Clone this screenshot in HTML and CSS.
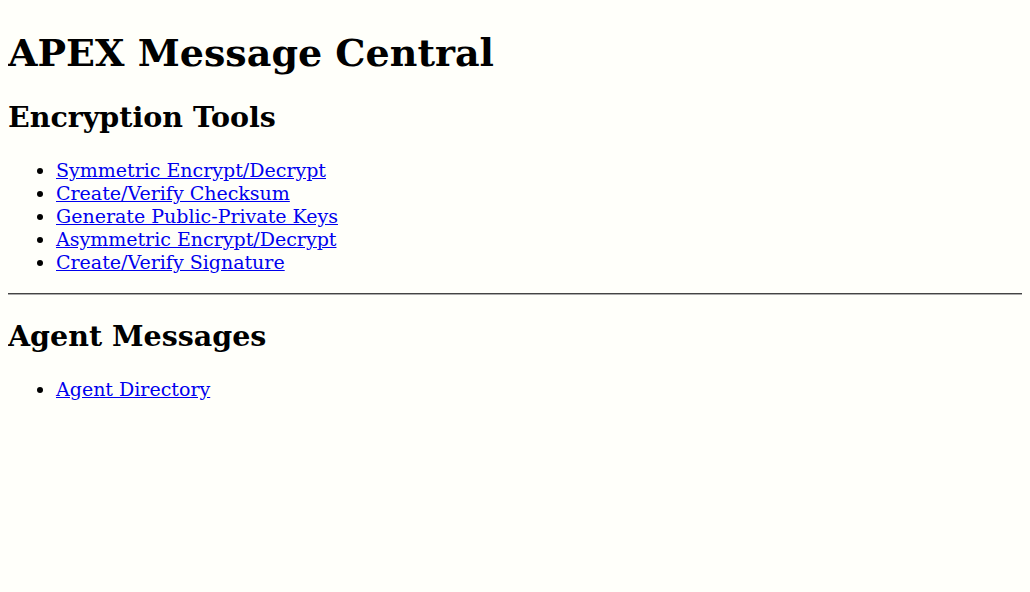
FILE: index.html
```html
<!DOCTYPE html>
<html>
<head>
<meta charset="utf-8">
<title>APEX Message Central</title>
<link rel="stylesheet" href="styles.css">
</head>
<body class="page">
<h1 class="title">APEX Message Central</h1>
<h2 class="section">Encryption Tools</h2>
<ul class="links links-first">
<li><a href="#">Symmetric Encrypt/Decrypt</a></li>
<li><a href="#">Create/Verify Checksum</a></li>
<li><a href="#">Generate Public-Private Keys</a></li>
<li><a href="#">Asymmetric Encrypt/Decrypt</a></li>
<li><a href="#">Create/Verify Signature</a></li>
</ul>
<hr class="rule">
<h2 class="section">Agent Messages</h2>
<ul class="links links-last">
<li><a href="#">Agent Directory</a></li>
</ul>
</body>
</html>
```
FILE: styles.css
```css
html { background: #fffffa; overflow: hidden; }
.page {
  font-family: "DejaVu Serif", serif;
  font-size: 19px;
  color: #000;
}
.title { margin-top: 22px; }
.links { padding-left: 48px; }
.links li { line-height: 23px; }
.links a { color: #0000ee; }
.links-first { margin-top: 24.6px; }
.links-last { margin-top: 25.6px; }
.rule {
  box-sizing: border-box;
  width: calc(100% + 30px);
  margin: 11px 0 9.5px 0;
  border: none;
  border-top: 1px solid #444;
  border-bottom: 1px solid #aaa;
  height: 2px;
}
```
